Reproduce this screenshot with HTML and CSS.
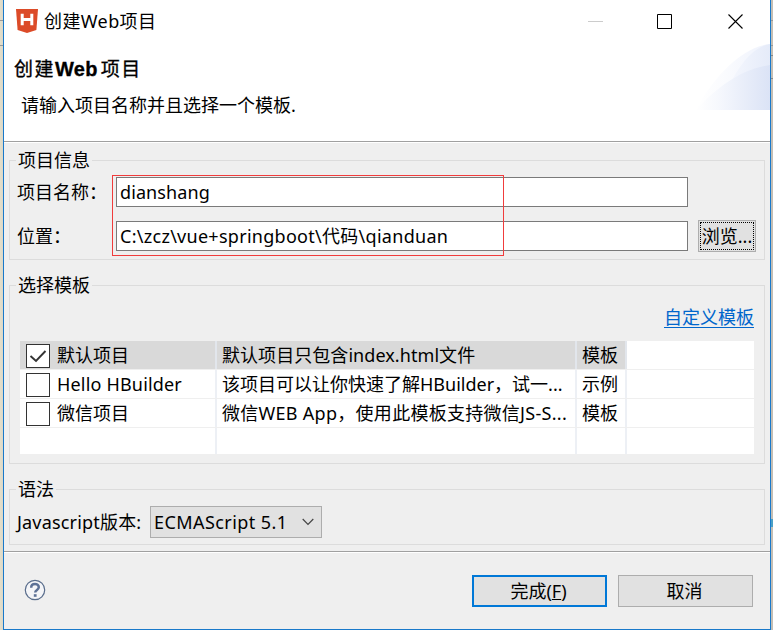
FILE: index.html
```html
<!DOCTYPE html>
<html lang="zh-CN">
<head>
<meta charset="utf-8">
<title>创建Web项目</title>
<link rel="stylesheet" href="styles.css">
</head>
<body>
<main class="dialog">
  <header class="header">
    <div class="titlebar">
      <svg class="logo" width="22" height="24" viewBox="0 0 22 25" preserveAspectRatio="none"><path d="M0 0h22l-1.600 22L11 25l-9.400-3z" fill="#dc4b28"/><path d="M6.200 5v12M15.800 5v12M6 11h10" stroke="#fff" stroke-width="3" fill="none"/></svg>
      <span class="title">创建Web项目</span>
      <svg class="controls" width="160" height="17" viewBox="0 0 160 17" fill="none"><path d="M0 9.500h15" stroke="#ccc"/><path d="M69.500 2.500h14v14h-14z" stroke="#000"/><path d="M140.500 2.500l14 14M154.500 2.500l-14 14" stroke="#000" stroke-width="1.100"/></svg>
    </div>
    <h1 class="heading">创建<b>Web</b>项目</h1>
    <p class="hint">请输入项目名称并且选择一个模板.</p>
    <svg class="swoosh" width="74" height="66" viewBox="0 0 74 66">
      <defs>
        <linearGradient id="a"><stop offset="0" stop-color="#fff"/><stop offset=".4" stop-color="#fafbfe"/><stop offset="1" stop-color="#eef2fc"/></linearGradient>
        <linearGradient id="c"><stop offset="0" stop-color="#fbfcff"/><stop offset="1" stop-color="#e5ebf9"/></linearGradient>
        <linearGradient id="b"><stop offset="0" stop-color="#fff"/><stop offset=".3" stop-color="#f6f8fd"/><stop offset="1" stop-color="#dbe3f6"/></linearGradient>
      </defs>
      <path d="M0 66C14 38 44 3 74 0v66z" fill="url(#a)"/>
      <path d="M30 48C42 24 54 4 74 0v66H18z" fill="url(#c)"/>
      <path d="M0 66C22 42 46 25 74 21v45z" fill="url(#b)"/>
    </svg>
  </header>

  <section class="group info">
    <h2 class="legend">项目信息</h2>
    <div class="form">
      <label>项目名称：</label><div class="field"><span>dianshang</span></div><span></span>
      <label>位置：</label><div class="field path"><span>C:\zcz\vue+springboot\代码\qianduan</span></div>
      <div class="btn browse"><span>浏览...</span></div>
    </div>
    <div class="marker"></div>
  </section>

  <section class="group templates">
    <h2 class="legend">选择模板</h2>
    <div class="link"><a>自定义模板</a></div>
    <div class="table">
      <div class="row selected"><div><i class="check"><svg width="22" height="22" viewBox="0 0 22 22"><path d="M3.500 11l5.500 5L18.500 6" fill="none" stroke="#333" stroke-width="1.900"/></svg></i>默认项目</div><div class="default">默认项目只包含index.html文件</div><div>模板</div><div></div></div>
      <div class="row"><div><i class="check"></i><span class="hello">Hello HBuilder</span></div><div>该项目可以让你快速了解HBuilder，试一...</div><div>示例</div><div></div></div>
      <div class="row"><div><i class="check"></i>微信项目</div><div class="wechat">微信WEB App，使用此模板支持微信JS-S...</div><div>模板</div><div></div></div>
      <div class="row last"><div></div><div></div><div></div><div></div></div>
    </div>
  </section>

  <section class="group syntax">
    <h2 class="legend">语法</h2>
    <div class="version">
      <label>Javascript版本:</label>
      <div class="combo"><span>ECMAScript 5.1</span><svg width="12" height="8" viewBox="0 0 12 8"><path d="M.7 1l5.300 5.300L11.300 1" fill="none" stroke="#444" stroke-width="1.200"/></svg></div>
    </div>
  </section>

  <footer class="footer">
    <svg class="help" width="22" height="22" viewBox="0 0 22 22"><circle cx="11" cy="11" r="9.700" fill="#f4f5f8" stroke="#596d8c" stroke-width="1.200"/><path d="M7.200 8.700C7.200 3.800 14.800 4 14.800 8.300c0 2.600-3.600 2.600-3.600 5.200" fill="none" stroke="#5d7196" stroke-width="2.500"/><path d="M9.800 15.200h2.800v2.600H9.800z" fill="#5d7196"/></svg>
    <div class="btn primary"><span>完成(<u>F</u>)</span></div>
    <div class="btn cancel">取消</div>
  </footer>
</main>
</body>
</html>
```
FILE: styles.css
```css
* { box-sizing: border-box; }
body {
  margin: 0;
  width: 773px;
  height: 630px;
  overflow: hidden;
  padding: 0 2px 0 3px;
  background:
    linear-gradient(#999 0 0) 0 20px / 100% 1px no-repeat,
    linear-gradient(#999 0 0) 0 45px / 100% 1px no-repeat,
    linear-gradient(#888 0 0) 100% 55px / 2px 1px no-repeat,
    linear-gradient(#888 0 0) 100% 78px / 2px 1px no-repeat,
    linear-gradient(#4a9fc4 0 0) 100% 519px / 2px 8px no-repeat,
    linear-gradient(90deg, #e4dfca 0, #dcd8c8 3px, #c4beb4 50%);
  font: 18px/24px "Noto Sans", "Noto Sans CJK SC", sans-serif;
  color: #000;
}
.dialog {
  display: flex;
  flex-direction: column;
  height: 630px;
  border: 1px solid #1979ca;
  border-top: 0;
  background: #efefef;
}
span { white-space: nowrap; }
.header {
  position: relative;
  height: 143px;
  background: #fff;
  border-bottom: 1px solid #fff;
  box-shadow: inset 0 -1px #a0a0a0;
}
.titlebar { display: flex; align-items: center; height: 42px; padding: 0 22px 0 12px; }
.logo { margin-right: 6px; }
.title { flex: 1; letter-spacing: .4px; }
.controls { margin-top: -1px; }
.heading { margin: 13px 0 0 10px; font: 400 19px/26px "Noto Sans CJK SC", sans-serif; letter-spacing: 1.5px; -webkit-text-stroke: .3px #000; }
.heading b { margin-right: 3px; font: 700 20px/20px "Liberation Sans", sans-serif; letter-spacing: .3px; }
.hint { margin: 12px 0 0 17px; }
.swoosh { position: absolute; right: 0; top: 44px; }
.group {
  position: relative;
  margin: 0 5px;
  border: 1px solid #dcdcdc;
}
.legend {
  width: max-content;
  margin: -13px 0 0 6px;
  padding: 0 2px;
  background: #efefef;
  font-size: 18px;
  font-weight: 400;
  line-height: 24px;
}
.info { height: 100px; margin-top: 17px; }
.form {
  display: grid;
  grid-template-columns: 99px 572px 68px;
  grid-template-rows: 32px 32px;
  row-gap: 12px;
  align-items: center;
  margin: 4px 0 0 7px;
}
.field { height: 30px; padding: 2px 3px; border: 1px solid #7a7a7a; background: #fff; letter-spacing: .1px; }
.path { letter-spacing: .28px; }
.btn {
  display: flex;
  align-items: center;
  justify-content: center;
  width: 135px;
  height: 32px;
  border: 1px solid #adadad;
  background: #e1e1e1;
}
.browse { width: 58px; margin-left: 10px; outline: 1px dotted #000; outline-offset: -3px; }
.marker { position: absolute; left: 102px; top: 14px; width: 392px; height: 81px; border: 1px solid #f03c3c; }
.templates { height: 179px; margin-top: 25px; }
.link { height: 24px; margin: 8px 10px 0 0; text-align: right; }
.link a { color: #0066cc; text-decoration: underline; text-underline-offset: 3px; }
.table { width: 734px; margin: 12px 0 0 10px; background: #fff; }
.row { display: grid; grid-template-columns: 197px 360px 50px 127px; height: 29px; border-bottom: 1px solid #efefef; }
.row > div { display: flex; align-items: center; padding-left: 5px; white-space: nowrap; overflow: hidden; border-right: 2px solid #edf0f5; }
.row > div:first-child { padding-left: 6px; }
.row > div:last-child { border: 0; }
.row > .default { letter-spacing: .06px; }
.row > .wechat { letter-spacing: .28px; }
.selected > div:not(:last-child) { background: #d9d9d9; border-right-color: #e2e6ec; }
.last { height: 26px; border: 0; }
.hello { letter-spacing: .18px; }
.check { display: block; width: 24px; height: 24px; margin: 2px 7px 0 0; border: 1px solid #333; background: #fff; }
.check svg { display: block; }
.syntax { height: 56px; margin-top: 25px; }
.version { display: flex; align-items: center; margin: 5px 0 0 7px; }
.version label { width: 133px; letter-spacing: .18px; white-space: nowrap; }
.combo { display: flex; align-items: center; justify-content: space-between; width: 172px; height: 32px; padding: 0 7px 0 3px; border: 1px solid #adadad; background: #e1e1e1; letter-spacing: .43px; }
.footer {
  display: flex;
  flex: 1;
  align-items: flex-start;
  margin-top: 6px;
  padding: 23px 17px 0 20px;
  border-top: 1px solid #a0a0a0;
  box-shadow: inset 0 1px #fff;
}
.help { margin: 4px auto 0 0; }
.primary { margin-right: 11px; padding-right: 2px; border: 2px solid #0078d7; }
.cancel { padding-right: 2px; }
```
